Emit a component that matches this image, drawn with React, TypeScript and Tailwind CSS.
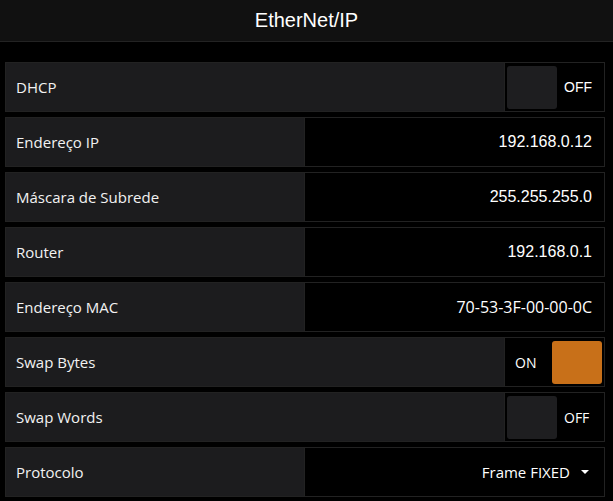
const LABEL_FONT = "font-['Segoe_UI','Open_Sans',sans-serif]";
const ARIAL_FONT = "font-['Liberation_Sans',Arial,sans-serif]";

type Row =
  | { kind: "toggle"; label: string; on: boolean; arial?: boolean }
  | { kind: "value"; label: string; value: string; segoe?: boolean }
  | { kind: "select"; label: string; value: string };

const rows: Row[] = [
  { kind: "toggle", label: "DHCP", on: false, arial: true },
  { kind: "value", label: "Endereço IP", value: "192.168.0.12" },
  { kind: "value", label: "Máscara de Subrede", value: "255.255.255.0" },
  { kind: "value", label: "Router", value: "192.168.0.1" },
  { kind: "value", label: "Endereço MAC", value: "70-53-3F-00-00-0C", segoe: true },
  { kind: "toggle", label: "Swap Bytes", on: true },
  { kind: "toggle", label: "Swap Words", on: false },
  { kind: "select", label: "Protocolo", value: "Frame FIXED" },
];

function Toggle({ on, arial }: { on: boolean; arial?: boolean }) {
  const textFont = arial ? ARIAL_FONT : LABEL_FONT;
  return (
    <div className="flex h-full w-[100px] shrink-0 items-center border-l border-[#222] bg-black p-[2px]">
      {on ? (
        <>
          <span className={`flex-1 pl-2 text-[14px] text-white ${textFont}`}>ON</span>
          <div className="h-[43px] w-[50px] rounded-[3px] bg-[#c87019]" />
        </>
      ) : (
        <>
          <div className="h-[43px] w-[50px] rounded-[3px] bg-[#1e1e20]" />
          <span className={`flex-1 pl-[7px] text-[14px] text-white ${textFont}`}>OFF</span>
        </>
      )}
    </div>
  );
}

export default function App() {
  return (
    <div className="min-h-[501px] bg-black text-white">
      <header className="flex h-[42px] items-center justify-center border-b border-[#232323] bg-[#111111] pb-[2px]">
        <h1 className={`${ARIAL_FONT} text-[20px] text-white`}>EtherNet/IP</h1>
      </header>

      <div className="flex flex-col gap-[5px] pl-[5px] pr-[8px] pt-[20px]">
        {rows.map((row) => (
          <div key={row.label} className="flex h-[50px] border border-[#222] bg-[#1c1c1e]">
            <div className={`flex flex-1 items-center pl-[10px] text-[15px] text-[#f2f2f2] ${LABEL_FONT}`}>
              {row.label}
            </div>
            {row.kind === "toggle" && <Toggle on={row.on} arial={row.arial} />}
            {row.kind === "value" && (
              <div
                className={`flex w-[300px] items-center justify-end border-l border-[#222] bg-black pr-[12px] text-[16px] text-white ${
                  row.segoe ? LABEL_FONT : ARIAL_FONT
                }`}
              >
                {row.value}
              </div>
            )}
            {row.kind === "select" && (
              <div className={`flex w-[300px] items-center justify-end gap-[11px] border-l border-[#222] bg-black pr-[15px] text-[15px] text-white ${LABEL_FONT}`}>
                <span>{row.value}</span>
                <svg width="8" height="5" viewBox="0 0 8 5">
                  <path d="M0 0 L8 0 L4 4 Z" fill="#ffffff" />
                </svg>
              </div>
            )}
          </div>
        ))}
      </div>
    </div>
  );
}
